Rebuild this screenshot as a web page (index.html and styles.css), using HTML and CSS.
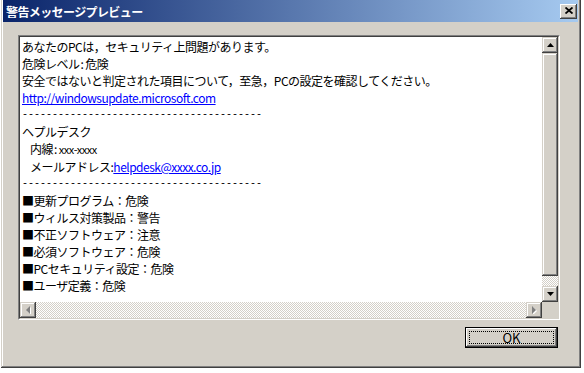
FILE: index.html
```html
<!DOCTYPE html>
<html lang="ja">
<head>
    <meta charset="UTF-8">
    <meta name="viewport" content="width=device-width, initial-scale=1.0">
    <title>警告メッセージプレビュー</title>
    <link rel="stylesheet" href="styles.css">
</head>

<body>
    <div class="window">
        <div class="titlebar">
            <span class="title">警告メッセージプレビュー</span>
            <button class="close-btn" aria-label="閉じる">
                <svg width="8" height="7" viewBox="0 0 8 7">
                    <path d="M0.5 0.5 L7.5 6.5 M7.5 0.5 L0.5 6.5" stroke="#000" stroke-width="1.8" fill="none"/>
                </svg>
            </button>
        </div>

        <div class="content">
            <div class="textbox">
                <div class="textbox-inner">
                    <div class="message">
                        <p>あなたのPCは，セキュリティ上問題があります。</p>
                        <p>危険レベル<span class="colon">:</span>危険</p>
                        <p>安全ではないと判定された項目について，至急，PCの設定を確認してください。</p>
                        <p><a href="#">http://windowsupdate.microsoft.com</a></p>
                        <p class="rule">----------------------------------------</p>
                        <p>ヘプルデスク</p>
                        <p class="indent">内線<span class="colon">:</span><span class="small">xxx-xxxx</span></p>
                        <p class="indent">メールアドレス:<a href="#">helpdesk@xxxx.co.jp</a></p>
                        <p class="rule">----------------------------------------</p>
                        <p>■更新プログラム：危険</p>
                        <p>■ウィルス対策製品：警告</p>
                        <p>■不正ソフトウェア：注意</p>
                        <p>■必須ソフトウェア：危険</p>
                        <p>■PCセキュリティ設定：危険</p>
                        <p>■ユーザ定義：危険</p>
                    </div>

                    <!-- Vertical scrollbar -->
                    <div class="vscroll">
                        <div class="sb-btn">
                            <svg width="7" height="4" viewBox="0 0 7 4"><polygon points="3.5,0 7,4 0,4" fill="#000"/></svg>
                        </div>
                        <div class="thumb"></div>
                        <div class="track"></div>
                        <div class="sb-btn">
                            <svg width="7" height="4" viewBox="0 0 7 4"><polygon points="0,0 7,0 3.5,4" fill="#000"/></svg>
                        </div>
                    </div>

                    <!-- Horizontal scrollbar (disabled) -->
                    <div class="hscroll">
                        <div class="sb-btn">
                            <svg width="5" height="8" viewBox="0 0 5 8">
                                <polygon points="4,0 4,8 0,4" fill="#fff" transform="translate(1,1)"/>
                                <polygon points="4,0 4,8 0,4" fill="#808080"/>
                            </svg>
                        </div>
                        <div class="track"></div>
                        <div class="sb-btn">
                            <svg width="5" height="8" viewBox="0 0 5 8">
                                <polygon points="0,0 0,8 4,4" fill="#fff" transform="translate(1,1)"/>
                                <polygon points="0,0 0,8 4,4" fill="#808080"/>
                            </svg>
                        </div>
                    </div>
                    <div class="corner"></div>
                </div>
            </div>

            <div class="actions">
                <button class="ok-btn"><span>OK</span></button>
            </div>
        </div>
    </div>
</body>
</html>
```

FILE: styles.css
```css
/* General Reset */
* {
    margin: 0;
    padding: 0;
    box-sizing: border-box;
}

body {
    background: #fff;
    font-family: "Noto Sans CJK JP", sans-serif;
    font-size: 12px;
    color: #000;
}

/* Window frame */
.window {
    width: 580px;
    height: 368px;
    margin-left: 1px;
    padding: 0 3px 3px 2px;
    background: #d4d0c8;
    box-shadow: inset -1px -1px #404040, inset 1px 0 #d4d0c8,
                inset -2px -2px #808080, inset 2px 0 #fff;
    display: flex;
    flex-direction: column;
}

/* Title Bar */
.titlebar {
    height: 22px;
    background: linear-gradient(to right, #0a246a, #a6caf0);
    display: flex;
    align-items: center;
    justify-content: space-between;
    padding: 0 1px 0 3px;
}

.title {
    color: #fff;
    font-weight: bold;
    font-size: 12px;
    letter-spacing: -0.6px;
}

.close-btn {
    width: 17px;
    height: 15px;
    border: none;
    background: #d4d0c8;
    box-shadow: inset -1px -1px #404040, inset 1px 1px #fff,
                inset -2px -2px #808080;
    display: flex;
    align-items: center;
    justify-content: center;
    padding-bottom: 1px;
}

/* Content */
.content {
    flex: 1;
    padding: 13px 18px 0 15px;
}

.textbox {
    height: 285px;
    border: 1px solid;
    border-color: #808080 #fff #fff #808080;
}

.textbox-inner {
    height: 100%;
    border: 1px solid;
    border-color: #404040 #d4d0c8 #d4d0c8 #404040;
    background: #fff;
    display: grid;
    grid-template-columns: 1fr 16px;
    grid-template-rows: 1fr 16px;
}

.message {
    padding: 1px 2px;
    line-height: 17px;
    letter-spacing: -0.5px;
    overflow: hidden;
    white-space: nowrap;
}

.message a {
    color: #0000ff;
    text-decoration: underline;
}

.rule {
    font-family: "Liberation Mono", monospace;
    font-size: 10px;
    letter-spacing: 0;
}

.indent {
    padding-left: 8px;
}

.colon {
    padding: 0 2px 0 1px;
}

.small {
    font-size: 11px;
}

/* Scrollbars */
.sb-btn {
    width: 16px;
    height: 16px;
    background: #d4d0c8;
    box-shadow: inset -1px -1px #404040, inset 1px 1px #d4d0c8,
                inset -2px -2px #808080, inset 2px 2px #fff;
    display: flex;
    align-items: center;
    justify-content: center;
}

.track {
    flex: 1;
    background: repeating-conic-gradient(#fff 0 25%, #d4d0c8 0 50%) 0 0 / 2px 2px;
}

.vscroll {
    display: flex;
    flex-direction: column;
}

.thumb {
    height: 223px;
    background: #d4d0c8;
    box-shadow: inset -1px -1px #404040, inset 1px 1px #d4d0c8,
                inset -2px -2px #808080, inset 2px 2px #fff;
}

.hscroll {
    display: flex;
}

.corner {
    background: #d4d0c8;
}

/* Button */
.actions {
    display: flex;
    justify-content: flex-end;
    padding-top: 7px;
    padding-right: 2px;
}

.ok-btn {
    width: 93px;
    height: 21px;
    border: 1px solid #000;
    background: #d4d0c8;
    box-shadow: inset -1px -1px #404040, inset 1px 1px #fff,
                inset -2px -2px #808080;
    padding: 3px;
    font-family: "Noto Sans CJK JP", sans-serif;
    font-size: 13px;
}

.ok-btn span {
    display: block;
    height: 100%;
    border: 1px dotted #000;
    line-height: 11px;
}
```
